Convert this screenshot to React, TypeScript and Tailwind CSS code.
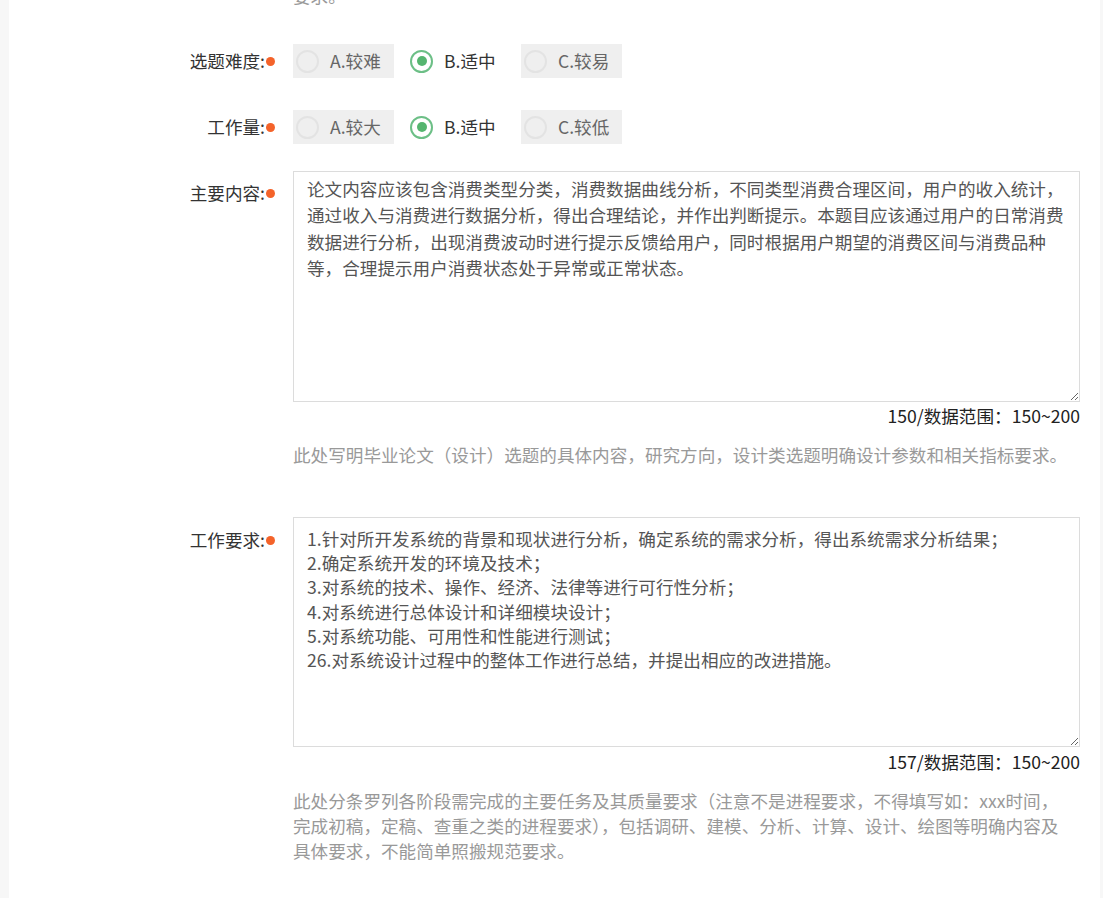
import { useState } from "react";

const font = { fontFamily: '"Noto Sans CJK SC", "Noto Sans", sans-serif' };

const contentText =
	"论文内容应该包含消费类型分类，消费数据曲线分析，不同类型消费合理区间，用户的收入统计，通过收入与消费进行数据分析，得出合理结论，并作出判断提示。本题目应该通过用户的日常消费数据进行分析，出现消费波动时进行提示反馈给用户，同时根据用户期望的消费区间与消费品种等，合理提示用户消费状态处于异常或正常状态。";

const requireText = [
	"1.针对所开发系统的背景和现状进行分析，确定系统的需求分析，得出系统需求分析结果；",
	"2.确定系统开发的环境及技术；",
	"3.对系统的技术、操作、经济、法律等进行可行性分析；",
	"4.对系统进行总体设计和详细模块设计；",
	"5.对系统功能、可用性和性能进行测试；",
	"26.对系统设计过程中的整体工作进行总结，并提出相应的改进措施。",
].join("\n");

function Label({ text }: { text: string }) {
	return (
		<div className="w-[266px] shrink-0 flex justify-end items-center text-[#333] text-[17.6px] leading-[24px]">
			<span>{text}</span>
			<span className="ml-[1px] w-[9px] h-[9px] rounded-full bg-[#f4632a]" />
		</div>
	);
}

function RadioGroup({ options }: { options: string[] }) {
	const [value, setValue] = useState(1);
	return (
		<div className="flex items-center gap-[13px]">
			{options.map((opt, i) => {
				const active = i === value;
				return (
					<button
						key={opt}
						onClick={() => setValue(i)}
						className={`w-[101px] h-[34px] flex items-center pl-[3px] gap-[11px] text-[17.6px] ${
							active ? "bg-transparent text-[#333]" : "bg-[#efefef] text-[#666]"
						}`}
					>
						<span
							className={`w-[23px] h-[23px] rounded-full border-2 flex items-center justify-center ${
								active ? "border-[#6cbf86] bg-white" : "border-[#e3e3e3]"
							}`}
						>
							{active && <span className="w-[10px] h-[10px] rounded-full bg-[#55b56f]" />}
						</span>
						<span>{opt}</span>
					</button>
				);
			})}
		</div>
	);
}

export default function App() {
	return (
		<div className="h-[898px] overflow-hidden bg-[#f7f7f7]" style={font}>
			<div className="ml-[9px] mr-[3px] h-full bg-white overflow-hidden">
				<div className="pl-[284px] -mt-[17px] text-[17.6px] leading-[25px] text-[#999]">要求。</div>

				<div className="flex items-center mt-[36px] gap-[18px]">
					<Label text="选题难度:" />
					<RadioGroup options={["A.较难", "B.适中", "C.较易"]} />
				</div>

				<div className="flex items-center mt-[32px] gap-[18px]">
					<Label text="工作量:" />
					<RadioGroup options={["A.较大", "B.适中", "C.较低"]} />
				</div>

				<div className="flex mt-[27px] gap-[18px]">
					<div className="pt-[10px]">
						<Label text="主要内容:" />
					</div>
					<div className="flex-1 mr-[20px]">
						<textarea
							defaultValue={contentText}
							className="block w-full h-[231px] border border-[#dcdcdc] pl-[13px] pr-[4px] pt-[4px] text-[17.6px] leading-[26.4px] text-[#555] outline-none"
							style={font}
						/>
						<div className="mt-[2px] text-right text-[17.6px] leading-[24px] text-[#222]">150/数据范围：150~200</div>
						<div className="mt-[14px] text-[17.6px] leading-[25px] text-[#999]">
							此处写明毕业论文（设计）选题的具体内容，研究方向，设计类选题明确设计参数和相关指标要求。
						</div>
					</div>
				</div>

				<div className="flex mt-[50px] gap-[18px]">
					<div className="pt-[11px]">
						<Label text="工作要求:" />
					</div>
					<div className="flex-1 mr-[20px]">
						<textarea
							defaultValue={requireText}
							className="block w-full h-[230px] border border-[#dcdcdc] pl-[13px] pr-[4px] pt-[9px] text-[17.6px] leading-[24.2px] text-[#555] outline-none"
							style={font}
						/>
						<div className="mt-[3px] text-right text-[17.6px] leading-[24px] text-[#222]">157/数据范围：150~200</div>
						<div className="mt-[14px] text-[17.6px] leading-[25px] text-[#999]">
							此处分条罗列各阶段需完成的主要任务及其质量要求（注意不是进程要求，不得填写如：xxx时间，
							<br />
							完成初稿，定稿、查重之类的进程要求），包括调研、建模、分析、计算、设计、绘图等明确内容及
							<br />
							具体要求，不能简单照搬规范要求。
						</div>
					</div>
				</div>
			</div>
		</div>
	);
}
